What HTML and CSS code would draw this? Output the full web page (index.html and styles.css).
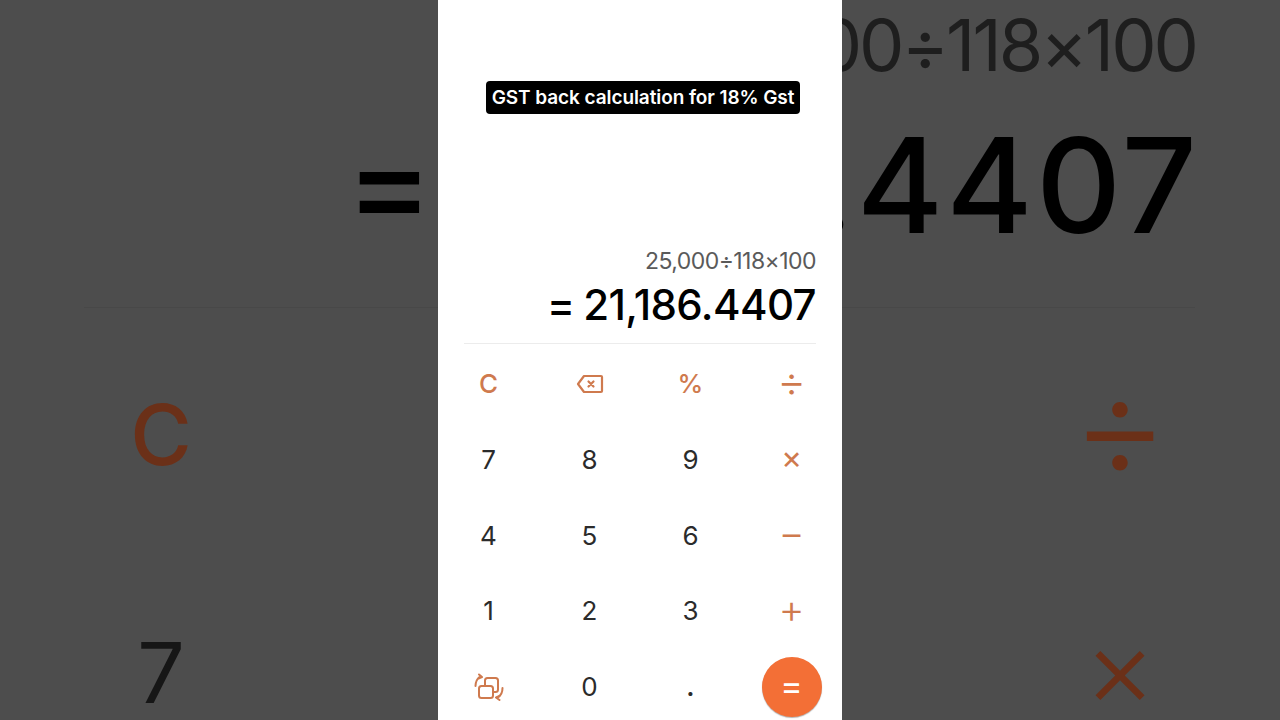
FILE: index.html
```html
<!DOCTYPE html>
<html lang="en">
<head>
    <meta charset="UTF-8">
    <meta name="viewport" content="width=device-width, initial-scale=1.0">
    <title>GST back calculation</title>
    <link rel="stylesheet" href="styles.css">
</head>
<body>

    <div class="stage">
        <!-- blurred, zoomed copy of the calculator on both sides -->
        <div class="side side-left">
            <span class="bg-equals">=</span>
            <span class="bg-line"></span>
            <span class="bg-key bg-c">C</span>
            <span class="bg-key bg-seven">7</span>
        </div>

        <div class="phone">
            <div class="caption">GST back calculation for 18% Gst</div>

            <div class="display">
                <div class="expr">25,000÷118×100</div>
                <div class="result">= 21,186.4407</div>
            </div>

            <div class="keys">
                <div class="key op letter">C</div>
                <div class="key op">
                    <svg class="icon" width="28" height="20" viewBox="0 0 28 20" fill="none" stroke="currentColor" stroke-width="2.200" stroke-linejoin="round">
                        <path d="M8 2H25a1 1 0 0 1 1 1V17a1 1 0 0 1-1 1H8L2 10Z"/>
                        <path d="M12.500 7.500l5 5M17.500 7.500l-5 5" stroke-linecap="round"/>
                    </svg>
                </div>
                <div class="key op letter">%</div>
                <div class="key op big k-div">÷</div>

                <div class="key">7</div>
                <div class="key">8</div>
                <div class="key">9</div>
                <div class="key op big k-times">×</div>

                <div class="key">4</div>
                <div class="key">5</div>
                <div class="key">6</div>
                <div class="key op big k-minus">−</div>

                <div class="key">1</div>
                <div class="key">2</div>
                <div class="key">3</div>
                <div class="key op big k-plus">+</div>

                <div class="key op">
                    <svg class="icon" width="30" height="28" viewBox="0 0 30 28" fill="none" stroke="currentColor" stroke-width="2" stroke-linecap="round" stroke-linejoin="round">
                        <rect x="11" y="5" width="13" height="14" rx="2.500"/>
                        <rect x="5" y="13" width="14" height="12" rx="2.500" fill="#fff"/>
                        <path d="M1.500 13c0-4 1.500-7 4-9"/>
                        <path d="M5 1.500l3 2.500-3.500 1.500"/>
                        <path d="M28.500 15c0 4-1.500 7-4 9"/>
                        <path d="M25.500 27l-3.500-2.500 3.500-1.500"/>
                    </svg>
                </div>
                <div class="key">0</div>
                <div class="key dot">.</div>
                <div class="key"><div class="equals">=</div></div>
            </div>
        </div>

        <div class="side side-right">
            <span class="bg-expr">25,000÷118×100</span>
            <span class="bg-result">= 21,186.4407</span>
            <span class="bg-line"></span>
            <span class="bg-key bg-div">÷</span>
            <span class="bg-key bg-times">×</span>
        </div>
    </div>

</body>
</html>
```

FILE: styles.css
```css
html, body {
    margin: 0;
    padding: 0;
    height: 100%;
    overflow: hidden;
}
body {
    font-family: Inter, "Liberation Sans", sans-serif;
    background-color: #4d4d4d;
}
.stage {
    display: flex;
    width: 1280px;
    height: 720px;
}
.side {
    position: relative;
    flex: 1;
    overflow: hidden;
    background-color: #4d4d4d;
    filter: blur(0.6px);
}
.side span {
    position: absolute;
    white-space: nowrap;
    line-height: 1;
}
.phone {
    width: 404px;
    height: 720px;
    overflow: hidden;
    background-color: #fff;
    display: flex;
    flex-direction: column;
}
.phone > div {
    flex-shrink: 0;
}
.caption {
    align-self: flex-start;
    margin: 81px 0 0 48px;
    width: 314px;
    height: 33px;
    line-height: 33px;
    background-color: #000;
    color: #fff;
    border-radius: 4px;
    text-align: center;
    font-size: 19px;
    font-weight: 600;
    letter-spacing: -0.08px;
    white-space: nowrap;
}
.display {
    margin: 133px 26px 0 26px;
    height: 96px;
    border-bottom: 1px solid #ececec;
    text-align: right;
}
.expr {
    font-size: 23px;
    line-height: 28px;
    color: #5a5a5a;
    letter-spacing: -0.55px;
}
.result {
    font-size: 42px;
    line-height: 60px;
    color: #000;
    font-weight: 500;
    letter-spacing: -0.6px;
    word-spacing: -2px;
}
.keys {
    display: grid;
    grid-template-columns: repeat(4, 101px);
    grid-auto-rows: 75.7px;
    padding-top: 2px;
}
.key {
    display: flex;
    align-items: center;
    justify-content: center;
    font-size: 26px;
    color: #2b2b2b;
}
.op {
    color: #cf7a4e;
}
.letter {
    font-size: 26px;
    font-weight: 500;
}
.big {
    font-weight: 300;
    padding-bottom: 5px;
    box-sizing: border-box;
}
.k-div {
    font-size: 44px;
}
.k-times {
    font-size: 32px;
    font-weight: 400;
}
.k-minus,
.k-plus {
    font-size: 40px;
}
.dot {
    font-weight: 600;
}
.equals {
    width: 60px;
    height: 60px;
    border-radius: 50%;
    background-color: #f36f36;
    color: #fff;
    text-align: center;
    line-height: 58px;
    font-size: 34px;
    box-shadow: 0 1px 1px rgba(0,0,0,0.3);
}

/* backdrop pieces */
.bg-line {
    top: 307px;
    height: 1px;
    background-color: #484848;
}
.side-left .bg-line {
    left: 84px;
    right: 0;
}
.side-right .bg-line {
    left: 0;
    right: 85px;
}
.bg-equals {
    top: 118px;
    left: 346px;
    font-size: 130px;
    font-weight: 500;
    color: #000;
}
.bg-key {
    transform: translate(-50%, -50%);
    font-size: 84px;
}
.bg-c {
    left: 161px;
    top: 435px;
    color: #6b3018;
    font-weight: 500;
}
.bg-seven {
    left: 161px;
    top: 673px;
    color: #161616;
}
.bg-div {
    left: 278px;
    top: 425px;
    color: #6b3018;
    font-size: 150px;
    font-weight: 300;
}
.bg-times {
    left: 278px;
    top: 667px;
    color: #6b3018;
    font-size: 110px;
    font-weight: 300;
}
.bg-expr {
    top: 9px;
    right: 84px;
    font-size: 72px;
    letter-spacing: -3px;
    color: #1e1e1e;
}
.bg-result {
    top: 119px;
    right: 80px;
    font-size: 132px;
    font-weight: 500;
    letter-spacing: 3px;
    color: #000;
}
```
